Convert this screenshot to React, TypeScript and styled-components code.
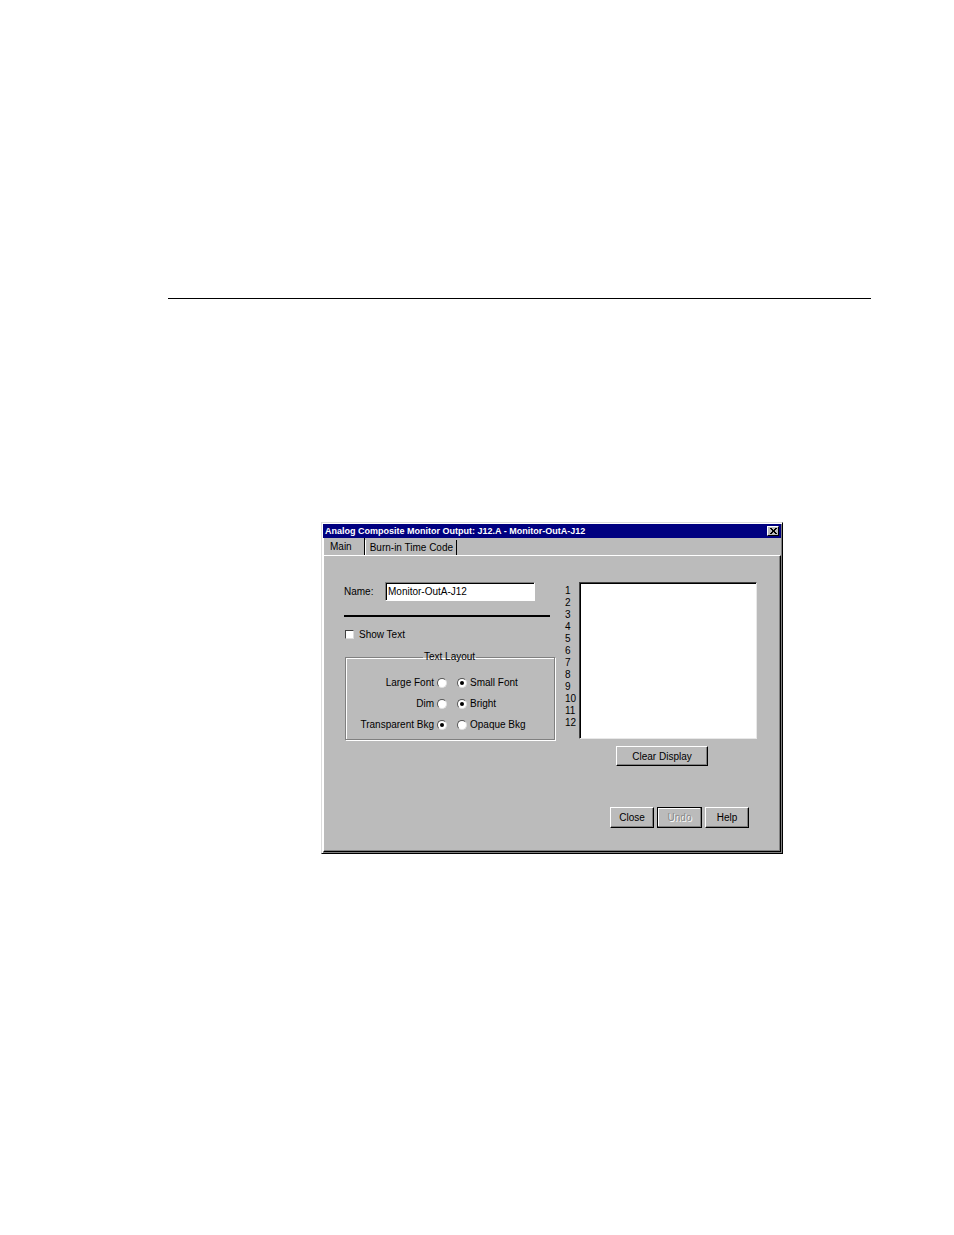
import React from "react";
import styled, { createGlobalStyle } from "styled-components";

const GlobalStyle = createGlobalStyle`
	html, body {
		margin: 0;
		padding: 0;
		background: #ffffff;
	}
	body {
		font-family: "Liberation Sans", Arial, sans-serif;
	}
`;

const Page = styled.div`
	width: 954px;
	height: 1235px;
	padding-top: 298px;
	box-sizing: border-box;
`;

const Rule = styled.div`
	margin-left: 168px;
	width: 703px;
	height: 1px;
	background: #000;
`;

const Dialog = styled.div`
	margin: 223px 0 0 321px;
	width: 462px;
	height: 332px;
	box-sizing: border-box;
	background: #bbbbbb;
	border-top: 1px solid #dcdcdc;
	border-left: 1px solid #dcdcdc;
	border-right: 1px solid #000;
	border-bottom: 1px solid #000;
	box-shadow: inset 1px 1px 0 #ffffff, inset -1px -1px 0 #808080;
	padding: 1px;
	display: flex;
	flex-direction: column;
	font-size: 10px;
	color: #000;
`;

const TitleBar = styled.div`
	height: 14px;
	background: #000080;
	display: flex;
	align-items: center;
	justify-content: space-between;
	padding: 0 2px 0 2px;
	color: #fff;
	font-weight: bold;
	font-size: 9px;
`;

const CloseBox = styled.div`
	width: 12px;
	height: 10px;
	box-sizing: border-box;
	background: #bbbbbb;
	border-top: 1px solid #fff;
	border-left: 1px solid #fff;
	border-right: 1px solid #000;
	border-bottom: 1px solid #000;
	display: flex;
	align-items: center;
	justify-content: center;
`;

const TabStrip = styled.div`
	height: 17px;
	display: flex;
	align-items: flex-end;
`;

const Tab = styled.div<{ $active?: boolean }>`
	height: ${(p) => (p.$active ? 17 : 15)}px;
	box-sizing: border-box;
	padding: ${(p) => (p.$active ? "3px 12px 0 6px" : "2px 3px 0 4px")};
	border-left: 1px solid #fff;
	border-right: 1px solid #000;
	line-height: 12px;
	white-space: nowrap;
`;

const TabPanel = styled.div`
	flex: 1;
	box-sizing: border-box;
	border-top: 1px solid #fff;
	border-left: 1px solid #fff;
	border-right: 1px solid #000;
	border-bottom: 1px solid #000;
	box-shadow: inset -1px -1px 0 #808080;
	padding: 26px 0 0 20px;
	display: flex;
	flex-direction: column;
`;

const Content = styled.div`
	display: grid;
	grid-template-columns: 211px auto;
	column-gap: 10px;
`;

const LeftColumn = styled.div`
	display: flex;
	flex-direction: column;
`;

const NameRow = styled.div`
	height: 19px;
	display: flex;
	align-items: center;
`;

const Label = styled.span`
	width: 41px;
	white-space: nowrap;
`;

const TextInput = styled.div`
	width: 150px;
	height: 19px;
	box-sizing: border-box;
	background: #fff;
	border-top: 1px solid #808080;
	border-left: 1px solid #808080;
	border-right: 1px solid #fff;
	border-bottom: 1px solid #fff;
	box-shadow: inset 1px 1px 0 #000;
	padding: 3px 0 0 2px;
	line-height: 12px;
	white-space: nowrap;
`;

const Separator = styled.div`
	margin-top: 14px;
	width: 206px;
	height: 2px;
	background: #000;
`;

const CheckRow = styled.div`
	margin-top: 11px;
	height: 12px;
	display: flex;
	align-items: center;
	gap: 5px;
	padding-left: 1px;
`;

const CheckBox = styled.div`
	width: 9px;
	height: 9px;
	box-sizing: border-box;
	background: #fff;
	border-top: 1px solid #404040;
	border-left: 1px solid #404040;
	border-right: 1px solid #dcdcdc;
	border-bottom: 1px solid #dcdcdc;
`;

const GroupBox = styled.fieldset`
	margin: 11px 0 0 1px;
	padding: 9px 0 4px 0;
	width: 210px;
	box-sizing: border-box;
	border: 1px solid #808080;
	box-shadow: 1px 1px 0 #fff, inset 1px 1px 0 #fff;
	min-width: 0;
`;

const GroupTitle = styled.legend`
	margin-left: 77px;
	padding: 0 1px;
	line-height: 12px;
`;

const OptionGrid = styled.div`
	display: grid;
	grid-template-columns: 88px 20px auto;
	grid-auto-rows: 21px;
	align-items: center;
`;

const OptionLabel = styled.span`
	text-align: right;
	white-space: nowrap;
`;

const RadioCell = styled.div`
	display: flex;
	align-items: center;
	gap: 3px;
	padding-left: 3px;
	white-space: nowrap;
`;

const Radio = styled.div<{ $checked?: boolean }>`
	width: 10px;
	height: 10px;
	box-sizing: border-box;
	border-radius: 50%;
	background: #fff;
	border: 1px solid;
	border-color: #555 #e0e0e0 #e0e0e0 #555;
	display: flex;
	align-items: center;
	justify-content: center;
	flex-shrink: 0;
	&::after {
		content: "";
		width: 4px;
		height: 4px;
		border-radius: 50%;
		background: ${(p) => (p.$checked ? "#000" : "transparent")};
	}
`;

const RightColumn = styled.div`
	display: flex;
	flex-direction: column;
`;

const DisplayRow = styled.div`
	display: flex;
`;

const LineNumbers = styled.div`
	width: 14px;
	padding-top: 3px;
	display: flex;
	flex-direction: column;
	line-height: 12px;
	font-size: 10px;
`;

const ListBox = styled.div`
	width: 178px;
	height: 157px;
	box-sizing: border-box;
	background: #fff;
	border-top: 1px solid #404040;
	border-left: 1px solid #404040;
	border-right: 1px solid #e8e8e8;
	border-bottom: 1px solid #e8e8e8;
	box-shadow: inset 1px 1px 0 #000;
`;

const Button = styled.div<{ $width: number; $disabled?: boolean; $default?: boolean }>`
	width: ${(p) => p.$width}px;
	height: 21px;
	box-sizing: border-box;
	background: #bbbbbb;
	border-top: 1px solid ${(p) => (p.$default ? "#000" : "#fff")};
	border-left: 1px solid ${(p) => (p.$default ? "#000" : "#fff")};
	border-right: 1px solid #000;
	border-bottom: 1px solid #000;
	box-shadow: inset -1px -1px 0 #808080
		${(p) => (p.$default ? ", inset 1px 1px 0 #fff" : "")};
	display: flex;
	align-items: center;
	justify-content: center;
	color: ${(p) => (p.$disabled ? "#8a8a8a" : "#000")};
	text-shadow: ${(p) => (p.$disabled ? "1px 1px 0 #fff" : "none")};
	white-space: nowrap;
`;

const ClearButton = styled(Button)`
	margin: 7px 0 0 51px;
	height: 20px;
`;

const ButtonBar = styled.div`
	margin-top: auto;
	display: flex;
	justify-content: flex-end;
	gap: 3px;
	padding: 0 31px 23px 0;
`;

const rows = [
	{ left: "Large Font", right: "Small Font", checked: 1 },
	{ left: "Dim", right: "Bright", checked: 1 },
	{ left: "Transparent Bkg", right: "Opaque Bkg", checked: 0 },
];

export default function App() {
	return (
		<>
			<GlobalStyle />
			<Page>
				<Rule />
				<Dialog>
					<TitleBar>
						<span>Analog Composite Monitor Output: J12.A - Monitor-OutA-J12</span>
						<CloseBox>
							<svg width="7" height="6" viewBox="0 0 7 6">
								<path d="M0 0 L6 6 M1 0 L7 6 M6 0 L0 6 M7 0 L1 6" stroke="#000" strokeWidth="1" />
							</svg>
						</CloseBox>
					</TitleBar>
					<TabStrip>
						<Tab $active>Main</Tab>
						<Tab>Burn-in Time Code</Tab>
					</TabStrip>
					<TabPanel>
						<Content>
							<LeftColumn>
								<NameRow>
									<Label>Name:</Label>
									<TextInput>Monitor-OutA-J12</TextInput>
								</NameRow>
								<Separator />
								<CheckRow>
									<CheckBox />
									<span>Show Text</span>
								</CheckRow>
								<GroupBox>
									<GroupTitle>Text Layout</GroupTitle>
									<OptionGrid>
										{rows.map((r) => (
											<React.Fragment key={r.left}>
												<OptionLabel>{r.left}</OptionLabel>
												<RadioCell>
													<Radio $checked={r.checked === 0} />
												</RadioCell>
												<RadioCell>
													<Radio $checked={r.checked === 1} />
													<span>{r.right}</span>
												</RadioCell>
											</React.Fragment>
										))}
									</OptionGrid>
								</GroupBox>
							</LeftColumn>
							<RightColumn>
								<DisplayRow>
									<LineNumbers>
										{Array.from({ length: 12 }, (_, i) => (
											<span key={i}>{i + 1}</span>
										))}
									</LineNumbers>
									<ListBox />
								</DisplayRow>
								<ClearButton $width={92}>Clear Display</ClearButton>
							</RightColumn>
						</Content>
						<ButtonBar>
							<Button $width={44}>Close</Button>
							<Button $width={45} $disabled $default>
								Undo
							</Button>
							<Button $width={44}>Help</Button>
						</ButtonBar>
					</TabPanel>
				</Dialog>
			</Page>
		</>
	);
}
